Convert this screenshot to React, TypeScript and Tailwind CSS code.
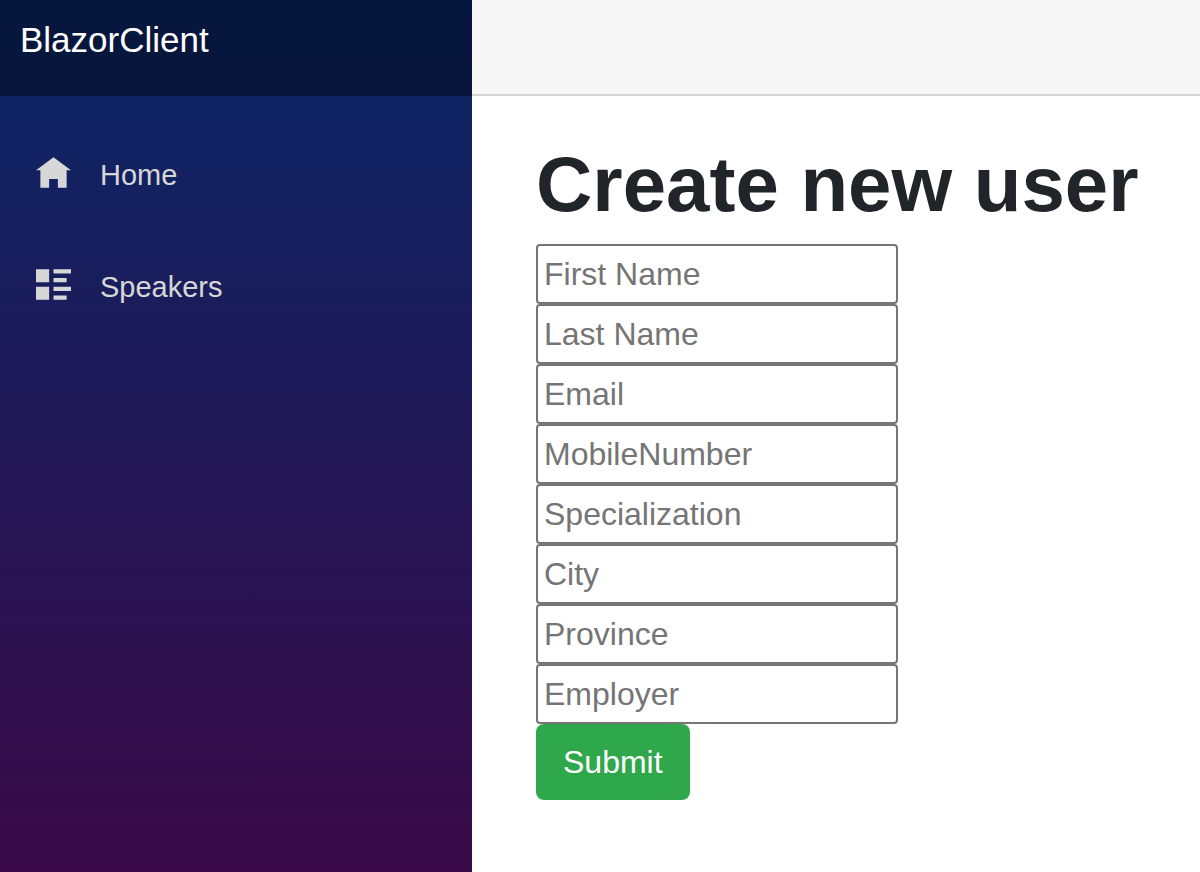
const fields = ["First Name", "Last Name", "Email", "MobileNumber", "Specialization", "City", "Province", "Employer"];

function HomeIcon() {
  return (
    <svg viewBox="0 0 8 7" className="h-[31px] w-[35px]" fill="currentColor" aria-hidden="true">
      <path d="M4 0l-4 3h1v4h2v-2h2v2h2v-4h1l-4-3z" />
    </svg>
  );
}

function ListIcon() {
  return (
    <svg viewBox="0 0 8 7" className="h-[31px] w-[35px]" fill="currentColor" aria-hidden="true">
      <path d="M0 0v3h3v-3h-3zm4 0v1h4v-1h-4zm0 2v1h3v-1h-3zm-4 2v3h3v-3h-3zm4 0v1h4v-1h-4zm0 2v1h3v-1h-3z" />
    </svg>
  );
}

export default function App() {
  return (
    <div className="flex min-h-screen bg-white font-['Liberation_Sans',Arial,sans-serif] text-[#212529]">
      <aside className="w-[472px] shrink-0 bg-[linear-gradient(180deg,#0a2767_0%,#390a47_100%)]">
        <div className="flex h-24 items-start bg-black/40 px-5 pt-4">
          <a href="#" className="text-[35px] leading-12 text-white">BlazorClient</a>
        </div>
        <nav className="flex flex-col gap-8 px-9 pt-10 text-[29px] text-[#d7d7d7]">
          <a href="#" className="flex h-20 items-center">
            <span className="w-16 pb-2"><HomeIcon /></span>Home
          </a>
          <a href="#" className="flex h-20 items-center">
            <span className="w-16 pb-2"><ListIcon /></span>Speakers
          </a>
        </nav>
      </aside>
      <div className="min-w-0 flex-1">
        <header className="h-24 border-b-2 border-[#d6d5d5] bg-[#f7f7f7]" />
        <main className="px-16 pt-10">
          <h1 className="mb-3 text-[78px] leading-24 font-bold whitespace-nowrap">Create new user</h1>
          <form className="flex flex-col items-start">
            {fields.map((name) => (
              <input key={name} aria-label={name} placeholder={name} className="h-15 w-[362px] rounded-sm border-2 border-[#767676] px-1.5 text-[32px] placeholder:text-[#757575]" />
            ))}
            <button type="button" className="h-19 rounded-lg bg-[#2fa84c] px-[27px] text-[32px] text-white">Submit</button>
          </form>
        </main>
      </div>
    </div>
  );
}
